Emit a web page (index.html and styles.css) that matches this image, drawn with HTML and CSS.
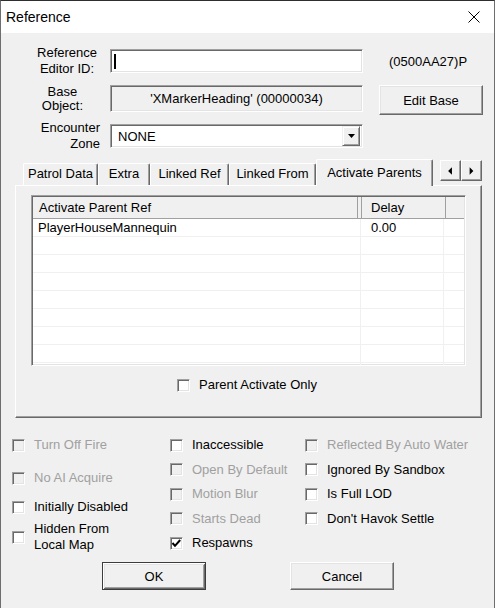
FILE: index.html
```html
<!DOCTYPE html>
<html lang="en">
<head>
  <meta charset="UTF-8" />
  <title>Reference</title>
  <link rel="stylesheet" href="styles.css">
</head>
<body>
  <div class="window">

    <!-- Title bar -->
    <div class="titlebar">
      <span class="title">Reference</span>
      <svg class="close" width="12" height="12" viewBox="0 0 12 12">
        <path d="M0.5 0.5 L11.5 11.5 M11.5 0.5 L0.5 11.5" stroke="#000" stroke-width="1" fill="none"/>
      </svg>
    </div>

    <!-- Top fields -->
    <div class="form">
      <div class="label label-ref">Reference<br>Editor ID:</div>
      <div class="edit"><span class="caret"></span></div>
      <div class="formid">(0500AA27)P</div>

      <div class="label label-base">Base<br>Object:</div>
      <div class="edit edit-ro">'XMarkerHeading' (00000034)</div>
      <button class="btn btn-edit">Edit Base</button>

      <div class="label label-zone">Encounter<br>Zone</div>
      <div class="edit combo">
        <span class="combo-text">NONE</span>
        <span class="combo-btn">
          <svg width="7" height="4" viewBox="0 0 7 4"><polygon points="0,0 7,0 3.5,4" fill="#000"/></svg>
        </span>
      </div>
    </div>

    <!-- Tabs -->
    <div class="tabs">
      <div class="tabstrip">
        <div class="tab tab-patrol">Patrol Data</div>
        <div class="tab tab-extra">Extra</div>
        <div class="tab tab-lref">Linked Ref</div>
        <div class="tab tab-lfrom">Linked From</div>
        <div class="tab tab-parents active">Activate Parents</div>
        <div class="spin">
          <span class="spin-btn">
            <svg width="20" height="20" viewBox="0 0 20 20"><polygon points="7.5,10 11.5,6 11.5,14" fill="#000"/></svg>
          </span>
          <span class="spin-btn">
            <svg width="20" height="20" viewBox="0 0 20 20"><polygon points="12,10 8,6 8,14" fill="#000"/></svg>
          </span>
        </div>
      </div>

      <div class="panel">
        <div class="listview">
          <div class="lv-head">
            <div class="hcol hcol-ref">Activate Parent Ref</div>
            <div class="hcol hcol-delay">Delay</div>
            <div class="hcol hcol-rest"></div>
          </div>
          <div class="lv-body">
            <div class="lv-row">
              <div class="cell cell-ref">PlayerHouseMannequin</div>
              <div class="cell cell-delay">0.00</div>
              <div class="cell"></div>
            </div>
            <div class="lv-row"><div class="cell cell-ref"></div><div class="cell cell-delay"></div><div class="cell"></div></div>
            <div class="lv-row"><div class="cell cell-ref"></div><div class="cell cell-delay"></div><div class="cell"></div></div>
            <div class="lv-row"><div class="cell cell-ref"></div><div class="cell cell-delay"></div><div class="cell"></div></div>
            <div class="lv-row"><div class="cell cell-ref"></div><div class="cell cell-delay"></div><div class="cell"></div></div>
            <div class="lv-row"><div class="cell cell-ref"></div><div class="cell cell-delay"></div><div class="cell"></div></div>
            <div class="lv-row"><div class="cell cell-ref"></div><div class="cell cell-delay"></div><div class="cell"></div></div>
            <div class="lv-row"><div class="cell cell-ref"></div><div class="cell cell-delay"></div><div class="cell"></div></div>
            <div class="lv-row"><div class="cell cell-ref"></div><div class="cell cell-delay"></div><div class="cell"></div></div>
          </div>
        </div>

        <div class="check check-center">
          <span class="box"></span>
          <span>Parent Activate Only</span>
        </div>
      </div>
    </div>

    <!-- Flags -->
    <div class="flags">
      <div class="flag-col flag-col-a">
        <div class="check disabled"><span class="box"></span><span>Turn Off Fire</span></div>
        <div class="check disabled"><span class="box"></span><span>No AI Acquire</span></div>
        <div class="check"><span class="box"></span><span>Initially Disabled</span></div>
        <div class="check"><span class="box"></span><span>Hidden From<br>Local Map</span></div>
      </div>
      <div class="flag-col">
        <div class="check"><span class="box"></span><span>Inaccessible</span></div>
        <div class="check disabled"><span class="box"></span><span>Open By Default</span></div>
        <div class="check disabled"><span class="box"></span><span>Motion Blur</span></div>
        <div class="check disabled"><span class="box"></span><span>Starts Dead</span></div>
        <div class="check">
          <span class="box">
            <svg width="11" height="11" viewBox="0 0 11 11"><path d="M1.5 5 L4 7.8 L9.2 2" stroke="#000" stroke-width="2" fill="none"/></svg>
          </span>
          <span>Respawns</span>
        </div>
      </div>
      <div class="flag-col">
        <div class="check disabled"><span class="box"></span><span>Reflected By Auto Water</span></div>
        <div class="check"><span class="box"></span><span>Ignored By Sandbox</span></div>
        <div class="check"><span class="box"></span><span>Is Full LOD</span></div>
        <div class="check"><span class="box"></span><span>Don't Havok Settle</span></div>
      </div>
    </div>

    <!-- Dialog buttons -->
    <div class="buttons">
      <button class="btn btn-default">OK</button>
      <button class="btn">Cancel</button>
    </div>

  </div>
</body>
</html>
```

FILE: styles.css
```css
html, body {
  margin: 0;
  padding: 0;
}

body {
  background: #f0f0f0;
  font-family: "Liberation Sans", Arial, sans-serif;
  font-size: 13px;
  color: #000;
}

.window {
  width: 495px;
  height: 608px;
  box-sizing: border-box;
  border: 1px solid #6e6e6e;
  border-top-color: #2e2e2e;
  border-bottom: 0;
  background: #f0f0f0;
  overflow: hidden;
}

/* title bar */
.titlebar {
  height: 32px;
  background: #fff;
  display: flex;
  align-items: center;
  justify-content: space-between;
  padding: 0 14px 0 5px;
}

.title {
  font-size: 14px;
}

/* top form */
.form {
  display: grid;
  grid-template-columns: 109px 269px 104px;
  grid-template-rows: 24px 27px 24px;
  row-gap: 12px;
  padding-top: 16px;
}

.label {
  align-self: center;
  justify-self: end;
  text-align: center;
  line-height: 16px;
}

.label-ref { margin-right: 13px; }
.label-base { margin-right: 27px; line-height: 14px; }
.label-zone { margin-right: 10px; text-align: right; }

.edit {
  width: 253px;
  box-sizing: border-box;
  background: #fff;
  border: 1px solid;
  border-color: #a0a0a0 #fff #fff #a0a0a0;
  box-shadow: inset 1px 1px #696969, inset -1px -1px #e3e3e3;
  display: flex;
  align-items: center;
}

.caret {
  width: 2px;
  height: 15px;
  background: #000;
  margin-left: 3px;
}

.edit-ro {
  background: #f0f0f0;
  justify-content: center;
}

.formid {
  align-self: center;
  padding-left: 10px;
}

.btn {
  font: inherit;
  color: #000;
  background: #f0f0f0;
  box-sizing: border-box;
  border: 1px solid;
  border-color: #fff #696969 #696969 #fff;
  box-shadow: inset -1px -1px #a0a0a0, inset 1px 1px #e3e3e3;
  padding: 0;
  width: 104px;
  height: 28px;
}

.btn-edit {
  height: 30px;
  align-self: start;
}

.btn-default {
  border-color: #3c3c3c;
  box-shadow: inset 1px 1px #fff, inset -1px -1px #696969, inset 2px 2px #e3e3e3, inset -2px -2px #a0a0a0;
}

.combo {
  justify-content: space-between;
  padding: 1px;
}

.combo-text {
  padding-left: 6px;
}

.combo-btn {
  width: 18px;
  height: 20px;
  box-sizing: border-box;
  margin-right: 1px;
  background: #f0f0f0;
  border: 1px solid;
  border-color: #f0f0f0 #696969 #696969 #f0f0f0;
  box-shadow: inset 1px 1px #fff, inset -1px -1px #a0a0a0;
  display: flex;
  align-items: center;
  justify-content: center;
}

/* tabs */
.tabs {
  margin: 11px 12px 0 14px;
}

.tabstrip {
  display: flex;
  align-items: flex-end;
  height: 26px;
  padding-left: 8px;
  position: relative;
  z-index: 1;
}

.tab {
  height: 22px;
  box-sizing: border-box;
  border-top: 1px solid #fff;
  border-left: 1px solid #fff;
  border-right: 1px solid #696969;
  box-shadow: inset -1px 0 #a0a0a0;
  border-radius: 2px 2px 0 0;
  line-height: 20px;
  text-align: center;
  white-space: nowrap;
}

.tab-patrol { width: 75px; }
.tab-extra { width: 52px; }
.tab-lref { width: 79px; }
.tab-lfrom { width: 87px; }
.tab-parents { width: 117px; }

.tab.active {
  height: 27px;
  margin-bottom: -1px;
  padding-top: 3px;
  background: #f0f0f0;
}

.spin {
  margin-left: auto;
  align-self: flex-start;
  margin-top: 1px;
  display: flex;
}

.spin-btn {
  width: 21px;
  height: 21px;
  box-sizing: border-box;
  border: 1px solid;
  border-color: #fff #696969 #696969 #fff;
  box-shadow: inset -1px -1px #a0a0a0;
  display: flex;
}

.panel {
  height: 233px;
  box-sizing: border-box;
  border: 1px solid;
  border-color: #fff #696969 #696969 #fff;
  box-shadow: inset -1px -1px #a0a0a0;
  padding: 9px 15px 0;
}

.listview {
  height: 171px;
  box-sizing: border-box;
  border: 1px solid;
  border-color: #a0a0a0 #fff #fff #a0a0a0;
  box-shadow: inset 1px 1px #696969, inset -1px -1px #e3e3e3;
  background: #fff;
  padding: 1px;
  overflow: hidden;
}

.lv-head {
  display: flex;
  height: 22px;
  box-sizing: border-box;
  border-bottom: 1px solid #a0a0a0;
  background: #f0f0f0;
  line-height: 21px;
}

.hcol {
  box-sizing: border-box;
  white-space: nowrap;
}

.hcol-ref {
  width: 325px;
  padding-left: 6px;
  border-right: 1px solid #a0a0a0;
}

.hcol-delay {
  width: 85px;
  margin-left: 3px;
  padding-left: 9px;
  border-left: 1px solid #a0a0a0;
  border-right: 1px solid #a0a0a0;
}

.hcol-rest {
  flex: 1;
}

.lv-row {
  display: flex;
  height: 18px;
  box-sizing: border-box;
  border-bottom: 1px solid #f0f0f0;
  line-height: 17px;
}

.cell {
  box-sizing: border-box;
  flex: 1;
}

.cell-ref {
  flex: none;
  width: 328px;
  padding-left: 5px;
  border-right: 1px solid #f0f0f0;
}

.cell-delay {
  flex: none;
  width: 83px;
  padding-left: 10px;
  border-right: 1px solid #f0f0f0;
}

/* checkboxes */
.check {
  display: flex;
  align-items: center;
  gap: 9px;
  line-height: 16px;
  white-space: nowrap;
}

.check-center {
  justify-content: center;
  margin-top: 11px;
  margin-right: 3px;
}

.box {
  flex: none;
  width: 13px;
  height: 13px;
  box-sizing: border-box;
  background: #fff;
  border: 1px solid;
  border-color: #a0a0a0 #fff #fff #a0a0a0;
  box-shadow: inset 1px 1px #696969, inset -1px -1px #e3e3e3;
  display: flex;
  align-items: center;
  justify-content: center;
}

.check.disabled {
  color: #a0a0a0;
}

.check.disabled .box {
  background: #f0f0f0;
}

.flags {
  display: grid;
  grid-template-columns: 158px 135px 1fr;
  padding-left: 11px;
  margin-top: 19px;
}

.flag-col {
  display: flex;
  flex-direction: column;
  gap: 8.5px;
}

.flag-col-a {
  gap: 0;
}

.flag-col-a .check:nth-child(2) { margin-top: 17px; }
.flag-col-a .check:nth-child(3) { margin-top: 13px; }
.flag-col-a .check:nth-child(4) { margin-top: 6px; }

.buttons {
  display: flex;
  gap: 84px;
  padding-left: 101px;
  margin-top: 9px;
}
```
